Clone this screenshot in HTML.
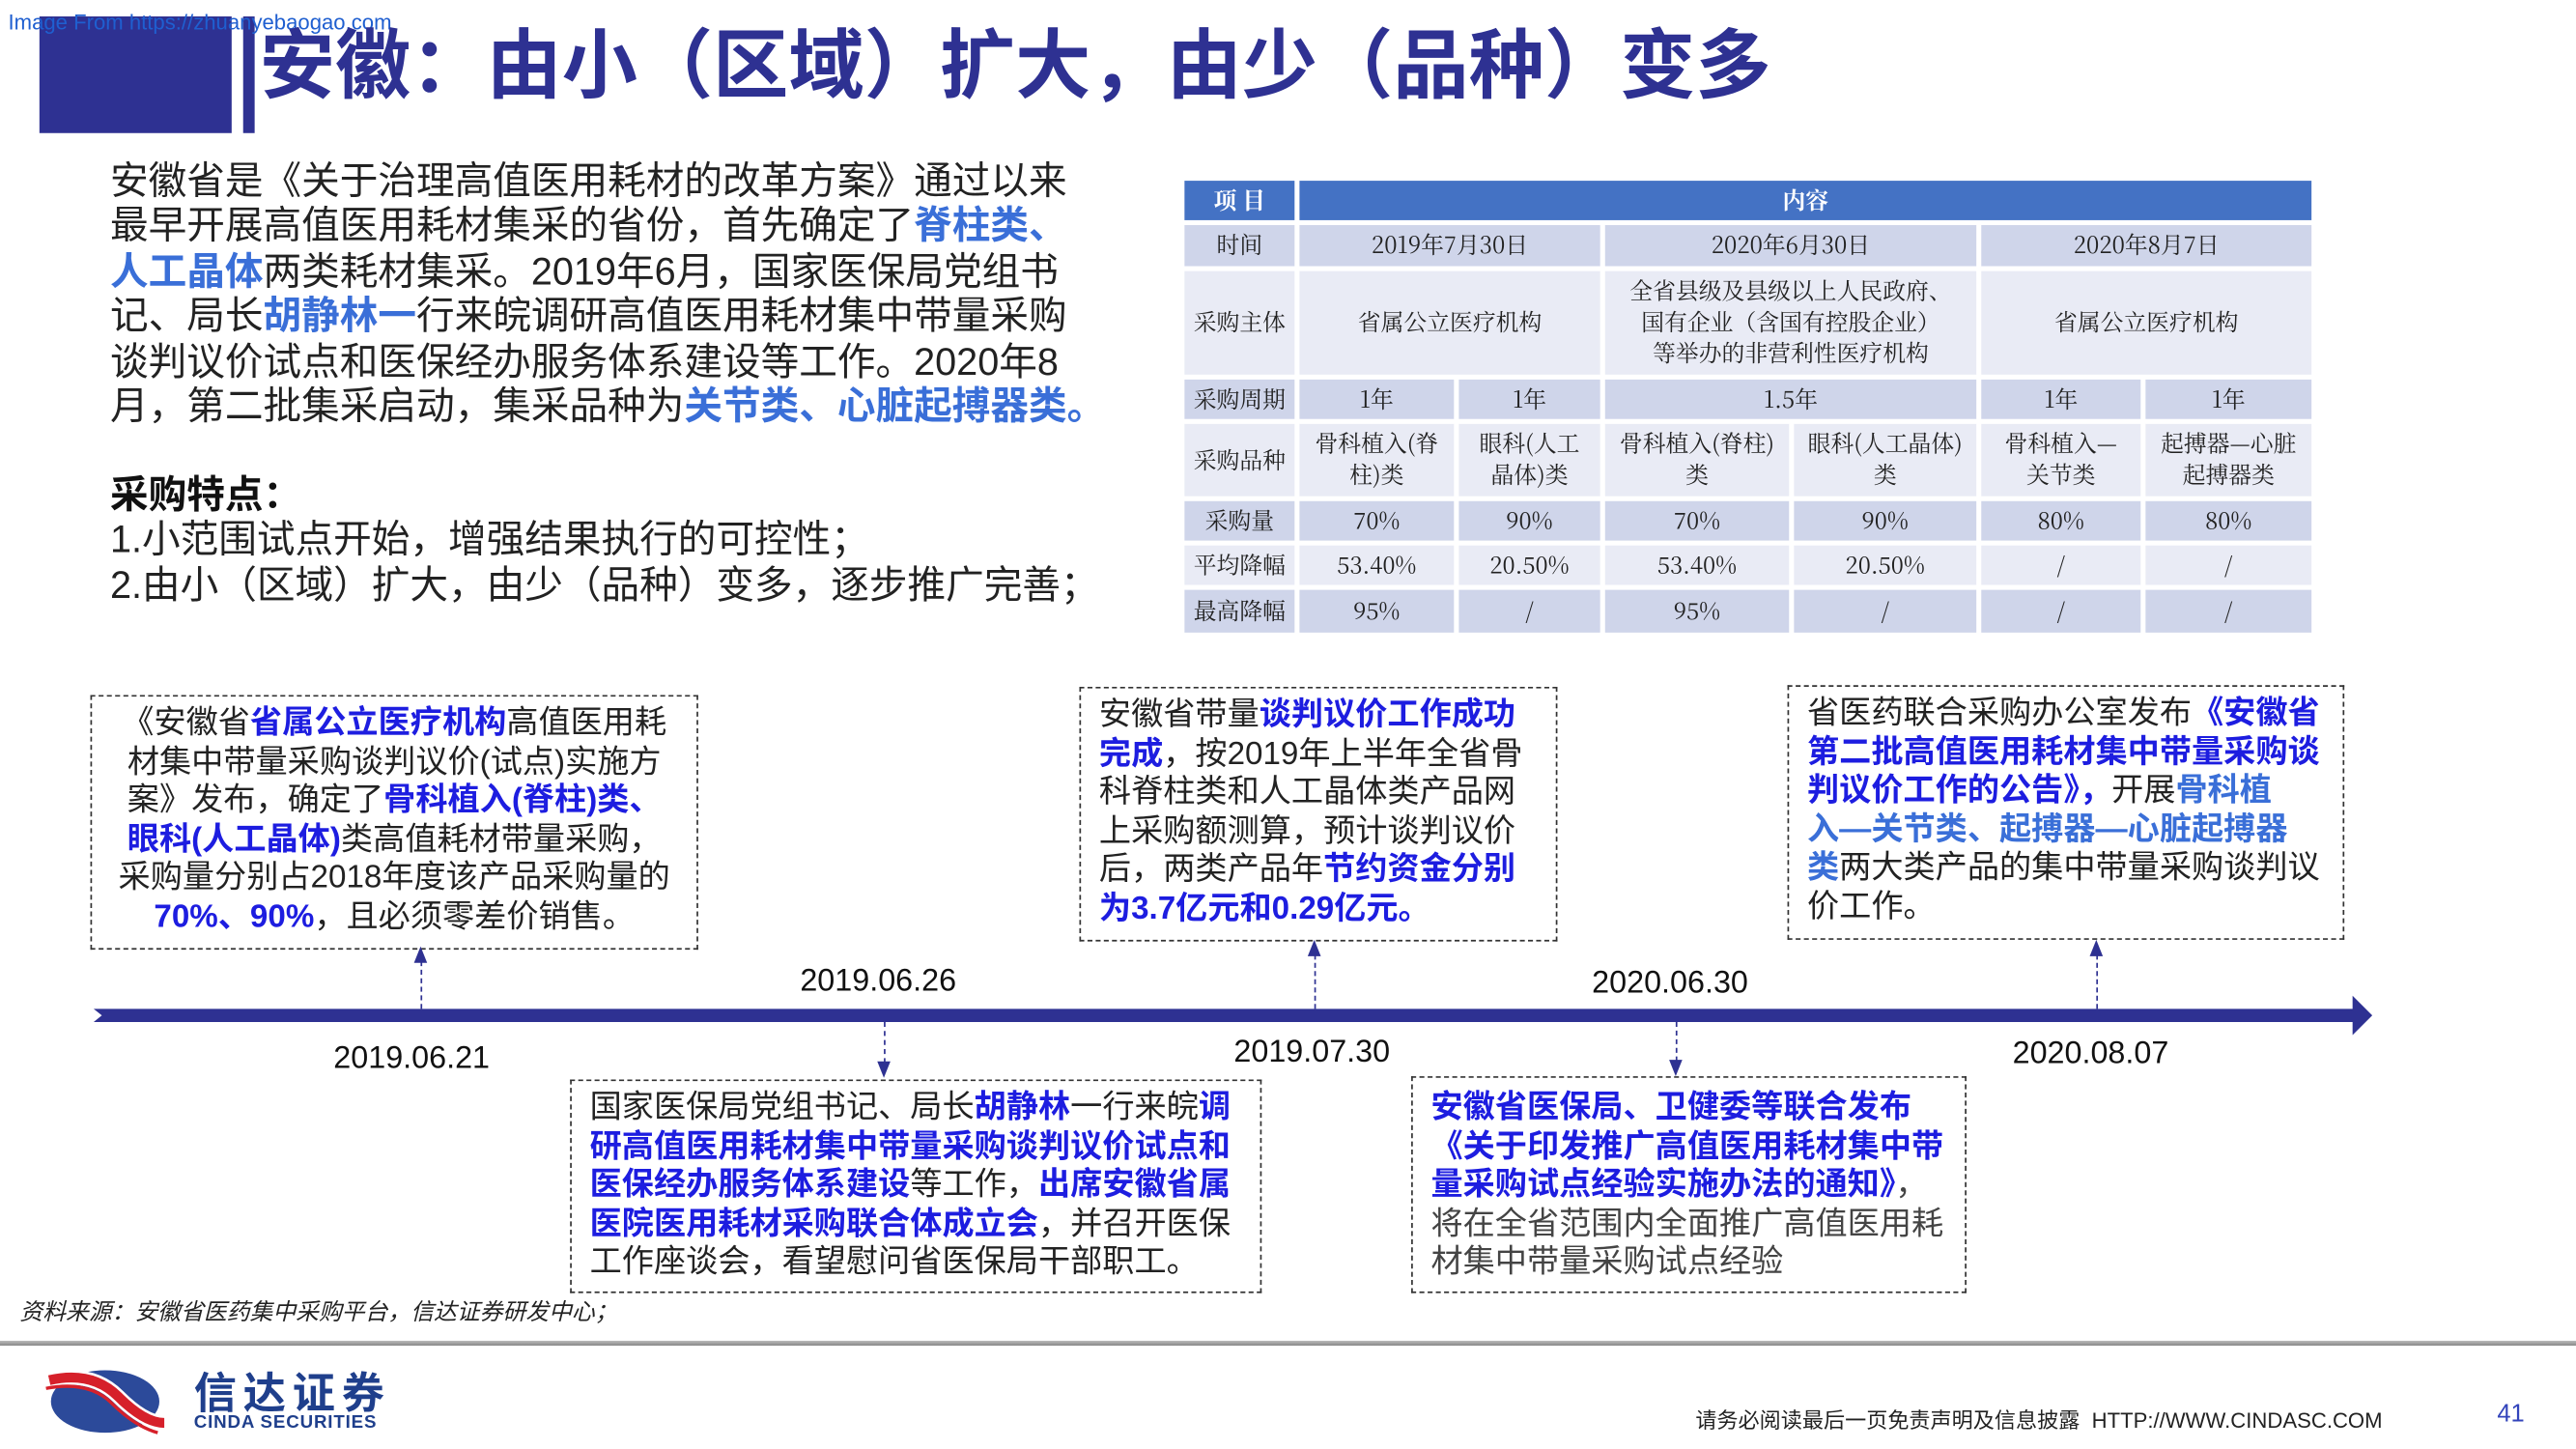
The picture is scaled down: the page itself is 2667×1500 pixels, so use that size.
<!DOCTYPE html>
<html><head><meta charset="utf-8"><style>
*{margin:0;padding:0;box-sizing:border-box}
html,body{width:2667px;height:1500px;overflow:hidden;background:#fff}
#w{position:absolute;left:0;top:0;width:1568px;height:882px;transform:scale(1.70089);transform-origin:0 0;font-family:"Liberation Sans","Noto Sans CJK SC",sans-serif;color:#222}
.a{position:absolute;white-space:nowrap}
.b{color:#3a6fd8;font-weight:bold}
.c{color:#1d1de0;font-weight:bold}
.box{position:absolute;border:1.3px dashed #333;font-size:19.5px;line-height:23.6px;white-space:nowrap}
.d{position:absolute;font-size:19px;font-family:"Liberation Sans",sans-serif;color:#111}
.v{position:absolute;width:0;border-left:1.3px dashed #2e3192}
table{position:absolute;left:718px;top:107px;border-collapse:separate;border-spacing:3px;font-family:"Noto Serif CJK SC","Liberation Serif",serif;font-size:14px;color:#222;text-align:center}
td{padding:0;line-height:19px}
.k{background:#cfd5ea}.l{background:#e9ebf5}
.h td{background:#4472c4;color:#fff;font-weight:bold}
</style></head><body><div id="w">
<div style="position:absolute;left:24px;top:10px;width:117px;height:71px;background:#2e3192"></div>
<div style="position:absolute;left:148px;top:10px;width:7px;height:71px;background:#2e3192"></div>
<div class="a" style="left:5px;top:6px;font-size:13px;color:#1f5fd0">Image From https://zhuanyebaogao.com</div>
<div class="a" style="left:158px;top:12px;font-size:46px;font-weight:bold;color:#2e3192;line-height:56px">安徽：由小（区域）扩大，由少（品种）变多</div>

<div class="a" style="left:67px;top:97px;font-size:23.3px;line-height:27.4px">安徽省是《关于治理高值医用耗材的改革方案》通过以来<br>最早开展高值医用耗材集采的省份，首先确定了<span class="b">脊柱类、</span><br><span class="b">人工晶体</span>两类耗材集采。2019年6月，国家医保局党组书<br>记、局长<span class="b">胡静林一</span>行来皖调研高值医用耗材集中带量采购<br>谈判议价试点和医保经办服务体系建设等工作。2020年8<br>月，第二批集采启动，集采品种为<span class="b">关节类、心脏起搏器类。</span></div>
<div class="a" style="left:67px;top:288px;font-size:23.3px;line-height:27.4px"><b style="color:#111">采购特点：</b><br>1.小范围试点开始，增强结果执行的可控性；<br>2.由小（区域）扩大，由少（品种）变多，逐步推广完善；</div>

<table>
<colgroup><col style="width:67px"><col style="width:94px"><col style="width:86px"><col style="width:112px"><col style="width:111px"><col style="width:97px"><col style="width:101px"></colgroup>
<tr class="h" style="height:24px"><td>项 目</td><td colspan="6">内容</td></tr>
<tr style="height:25px"><td class="k">时间</td><td class="k" colspan="2">2019年7月30日</td><td class="k" colspan="2">2020年6月30日</td><td class="k" colspan="2">2020年8月7日</td></tr>
<tr style="height:63px"><td class="l">采购主体</td><td class="l" colspan="2">省属公立医疗机构</td><td class="l" colspan="2">全省县级及县级以上人民政府、<br>国有企业（含国有控股企业）<br>等举办的非营利性医疗机构</td><td class="l" colspan="2">省属公立医疗机构</td></tr>
<tr style="height:24px"><td class="k">采购周期</td><td class="k">1年</td><td class="k">1年</td><td class="k" colspan="2">1.5年</td><td class="k">1年</td><td class="k">1年</td></tr>
<tr style="height:44px"><td class="l">采购品种</td><td class="l">骨科植入(脊<br>柱)类</td><td class="l">眼科(人工<br>晶体)类</td><td class="l">骨科植入(脊柱)<br>类</td><td class="l">眼科(人工晶体)<br>类</td><td class="l">骨科植入—<br>关节类</td><td class="l">起搏器—心脏<br>起搏器类</td></tr>
<tr style="height:24px"><td class="k">采购量</td><td class="k">70%</td><td class="k">90%</td><td class="k">70%</td><td class="k">90%</td><td class="k">80%</td><td class="k">80%</td></tr>
<tr style="height:24px"><td class="l">平均降幅</td><td class="l">53.40%</td><td class="l">20.50%</td><td class="l">53.40%</td><td class="l">20.50%</td><td class="l">/</td><td class="l">/</td></tr>
<tr style="height:26px"><td class="k">最高降幅</td><td class="k">95%</td><td class="k">/</td><td class="k">95%</td><td class="k">/</td><td class="k">/</td><td class="k">/</td></tr>
</table>

<div class="box" style="left:55px;top:423px;width:370px;height:155px;padding:5px 0 0 0;text-align:center">《安徽省<span class="c">省属公立医疗机构</span>高值医用耗<br>材集中带量采购谈判议价(试点)实施方<br>案》发布，确定了<span class="c">骨科植入(脊柱)类、</span><br><span class="c">眼科(人工晶体)</span>类高值耗材带量采购，<br>采购量分别占2018年度该产品采购量的<br><span class="c">70%、90%</span>，且必须零差价销售。</div>
<div class="box" style="left:657px;top:418px;width:291px;height:155px;padding:5px 0 0 11px">安徽省带量<span class="c">谈判议价工作成功</span><br><span class="c">完成</span>，按2019年上半年全省骨<br>科脊柱类和人工晶体类产品网<br>上采购额测算，预计谈判议价<br>后，两类产品年<span class="c">节约资金分别</span><br><span class="c">为3.7亿元和0.29亿元。</span></div>
<div class="box" style="left:1088px;top:417px;width:339px;height:155px;padding:5px 0 0 11px">省医药联合采购办公室发布<span class="c">《安徽省</span><br><span class="c">第二批高值医用耗材集中带量采购谈</span><br><span class="c">判议价工作的公告》，</span>开展<span class="b">骨科植</span><br><span class="b">入—关节类、起搏器—心脏起搏器</span><br><span class="b">类</span>两大类产品的集中带量采购谈判议<br>价工作。</div>
<div class="box" style="left:347px;top:657px;width:421px;height:130px;padding:5px 0 0 11px">国家医保局党组书记、局长<span class="c">胡静林</span>一行来皖<span class="c">调</span><br><span class="c">研高值医用耗材集中带量采购谈判议价试点和</span><br><span class="c">医保经办服务体系建设</span>等工作，<span class="c">出席安徽省属</span><br><span class="c">医院医用耗材采购联合体成立会</span>，并召开医保<br>工作座谈会，看望慰问省医保局干部职工。</div>
<div class="box" style="left:859px;top:655px;width:338px;height:132px;padding:7px 0 0 11px;color:#444"><span class="c">安徽省医保局、卫健委等联合发布</span><br><span class="c">《关于印发推广高值医用耗材集中带</span><br><span class="c">量采购试点经验实施办法的通知》</span>，<br>将在全省范围内全面推广高值医用耗<br>材集中带量采购试点经验</div>

<svg style="position:absolute;left:0;top:0" width="1568" height="882">
<polygon points="57,614 1432,614 1432,606 1444,618 1432,630 1432,622 57,622 62,618" fill="#2e3192"/>
<g fill="#2e3192"><polygon points="252,586 256,576 260,586"/><polygon points="796,582 800,572 804,582"/><polygon points="1272,582 1276,572 1280,582"/><polygon points="534,646 538,656 542,646"/><polygon points="1016,645 1020,655 1024,645"/></g>
</svg>
<div class="v" style="left:256px;top:585px;height:29px"></div>
<div class="v" style="left:800px;top:581px;height:33px"></div>
<div class="v" style="left:1276px;top:581px;height:33px"></div>
<div class="v" style="left:538px;top:622px;height:25px"></div>
<div class="v" style="left:1020px;top:622px;height:24px"></div>
<div class="d" style="left:203px;top:634px">2019.06.21</div>
<div class="d" style="left:487px;top:587px">2019.06.26</div>
<div class="d" style="left:751px;top:630px">2019.07.30</div>
<div class="d" style="left:969px;top:588px">2020.06.30</div>
<div class="d" style="left:1225px;top:631px">2020.08.07</div>

<div class="a" style="left:12px;top:788px;font-size:14px;font-style:italic;color:#222">资料来源：安徽省医药集中采购平台，信达证券研发中心；</div>
<div style="position:absolute;left:0;top:816px;width:1568px;height:3px;background:linear-gradient(#bbb,#888)"></div>
<svg style="position:absolute;left:26px;top:832px" width="76" height="42" viewBox="0 0 76 42">
<ellipse cx="38" cy="21" rx="33" ry="19" fill="#2c4a9a"/>
<path d="M4 8 Q30 2 46 18 T74 34" stroke="#fff" stroke-width="9" fill="none"/>
<path d="M4 8 Q30 2 46 18 T74 34" stroke="#d6202a" stroke-width="6" fill="none"/>
<path d="M2 13 Q28 8 42 22 T70 40" stroke="#d6202a" stroke-width="2" fill="none"/>
</svg>
<div class="a" style="left:118px;top:834px;font-size:26px;font-weight:bold;color:#1f3f8c;letter-spacing:4px;line-height:28px">信达证券</div>
<div class="a" style="left:118px;top:860px;font-size:11px;font-weight:bold;color:#1f3f8c;letter-spacing:0.5px">CINDA SECURITIES</div>
<div class="a" style="left:1032px;top:854px;font-size:13px;color:#222">请务必阅读最后一页免责声明及信息披露 &nbsp;HTTP://WWW.CINDASC.COM</div>
<div class="a" style="left:1520px;top:852px;font-size:15px;color:#3344bb">41</div>
</div></body></html>
